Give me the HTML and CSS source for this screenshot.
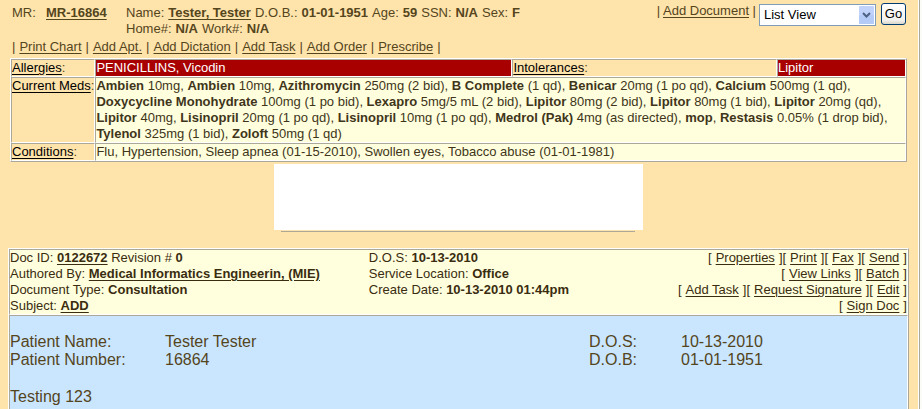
FILE: index.html
```html
<!DOCTYPE html>
<html lang="en">
<head>
<meta charset="utf-8">
<title>Patient Chart</title>
<link rel="stylesheet" href="styles.css">
</head>
<body>
<main class="page">
  <header class="top">
    <div class="patient">
      <span class="mr-label">MR:</span>
      <a class="mr-number" href="#">MR-16864</a>
      <div class="identity">
        <div class="fields"><span>Name:</span><a href="#"><b>Tester, Tester</b></a><span>D.O.B.:</span><b>01-01-1951</b><span>Age:</span><b>59</b><span>SSN:</span><b>N/A</b><span>Sex:</span><b>F</b></div>
        <div class="fields"><span>Home#:</span><b>N/A</b><span>Work#:</span><b>N/A</b></div>
      </div>
    </div>
    <form class="view-form">
      <span class="add-doc">| <a href="#">Add Document</a> |</span>
      <span class="select-wrap">
        <select aria-label="View"><option>List View</option></select>
        <svg class="arrow" viewBox="0 0 15 18" aria-hidden="true"><rect width="15" height="18" rx="1" fill="#c1d3fb"/><rect y="9" width="15" height="9" rx="1" fill="#b5cbf7"/><path d="M4 7l3.500 3.500L11 7" fill="none" stroke="#4d6185" stroke-width="2"/></svg>
      </span>
      <button type="button">Go</button>
    </form>
  </header>
  <nav class="actions"><span>|</span><a href="#">Print Chart</a><span>|</span><a href="#">Add Apt.</a><span>|</span><a href="#">Add Dictation</a><span>|</span><a href="#">Add Task</a><span>|</span><a href="#">Add Order</a><span>|</span><a href="#">Prescribe</a><span>|</span></nav>
  <table class="summary">
    <colgroup><col class="c1"><col class="c2"><col class="c3"><col class="c4"></colgroup>
    <tr>
      <th><a href="#">Allergies</a>:</th>
      <td class="alert">PENICILLINS, Vicodin</td>
      <th><a href="#">Intolerances</a>:</th>
      <td class="alert">Lipitor</td>
    </tr>
    <tr>
      <th><a href="#">Current Meds</a>:</th>
      <td colspan="3"><b>Ambien</b> 10mg, <b>Ambien</b> 10mg, <b>Azithromycin</b> 250mg (2 bid), <b>B Complete</b> (1 qd), <b>Benicar</b> 20mg (1 po qd), <b>Calcium</b> 500mg (1 qd), <b>Doxycycline Monohydrate</b> 100mg (1 po bid), <b>Lexapro</b> 5mg/5 mL (2 bid), <b>Lipitor</b> 80mg (2 bid), <b>Lipitor</b> 80mg (1 bid), <b>Lipitor</b> 20mg (qd), <b>Lipitor</b> 40mg, <b>Lisinopril</b> 20mg (1 po qd), <b>Lisinopril</b> 10mg (1 po qd), <b>Medrol (Pak)</b> 4mg (as directed), <b>mop</b>, <b>Restasis</b> 0.05% (1 drop bid), <b>Tylenol</b> 325mg (1 bid), <b>Zoloft</b> 50mg (1 qd)</td>
    </tr>
    <tr>
      <th><a href="#">Conditions</a>:</th>
      <td colspan="3">Flu, Hypertension, Sleep apnea (01-15-2010), Swollen eyes, Tobacco abuse (01-01-1981)</td>
    </tr>
  </table>
  <div class="notice"><div class="panel"></div><div class="rule"></div></div>
  <article class="document">
    <header class="doc-head">
      <div>
        <div>Doc ID: <a href="#"><b>0122672</b></a> Revision # <b>0</b></div>
        <div>Authored By: <a href="#"><b>Medical Informatics Engineerin, (MIE)</b></a></div>
        <div>Document Type: <b>Consultation</b></div>
        <div>Subject: <a href="#"><b>ADD</b></a></div>
      </div>
      <div>
        <div>D.O.S: <b>10-13-2010</b></div>
        <div>Service Location: <b>Office</b></div>
        <div>Create Date: <b>10-13-2010 01:44pm</b></div>
      </div>
      <div class="doc-links">
        <div><span>[</span><a href="#">Properties</a><span>][</span><a href="#">Print</a><span>][</span><a href="#">Fax</a><span>][</span><a href="#">Send</a><span>]</span></div>
        <div><span>[</span><a href="#">View Links</a><span>][</span><a href="#">Batch</a><span>]</span></div>
        <div><span>[</span><a href="#">Add Task</a><span>][</span><a href="#">Request Signature</a><span>][</span><a href="#">Edit</a><span>]</span></div>
        <div><span>[</span><a href="#">Sign Doc</a><span>]</span></div>
      </div>
    </header>
    <section class="doc-body">
      <div class="facts">
        <span>Patient Name:</span><span>Tester Tester</span><span>D.O.S:</span><span>10-13-2010</span>
        <span>Patient Number:</span><span>16864</span><span>D.O.B:</span><span>01-01-1951</span>
      </div>
      <p>Testing 123</p>
    </section>
  </article>
</main>
<aside class="edge"></aside>
</body>
</html>
```
FILE: styles.css
```css
* { box-sizing: border-box; }
body {
  margin: 0;
  min-height: 100vh;
  display: flex;
  background: #fee3ab;
  color: #54451c;
  font: 13px/16px "Liberation Sans", Arial, sans-serif;
}
a { color: inherit; text-underline-offset: 2px; }
.page { flex: 1; display: flex; flex-direction: column; padding: 3px 9px 0 8px; }
.edge { width: 4px; background: #fbfbf8; border-left: 1px solid #fff; box-shadow: inset 1px 0 #aca899; }

.top { display: flex; justify-content: space-between; padding: 0 3px 0 4px; }
.patient { display: flex; padding-top: 2px; }
.mr-label { width: 34px; }
.mr-number { width: 80px; font-weight: bold; }
.fields { display: flex; gap: 4px; }
.view-form { display: flex; align-items: flex-start; }
.add-doc { margin-right: 3px; }
.select-wrap { position: relative; margin: 1px 5px 0 0; }
select {
  display: block;
  appearance: none;
  width: 117px;
  height: 22px;
  padding: 0 20px 0 4px;
  border: 1px solid #7f9db9;
  border-radius: 0;
  background: #fff;
  color: #000;
  font: 13px/20px "Liberation Sans", Arial, sans-serif;
}
.arrow { position: absolute; top: 2px; right: 2px; width: 15px; height: 18px; pointer-events: none; }
button {
  width: 25px;
  height: 22px;
  padding: 0;
  border: 1px solid #003c74;
  border-radius: 3px;
  background: linear-gradient(#fff, #f3f2ed 80%, #d9d5c9);
  color: #000;
  font: 13px/20px "Liberation Sans", Arial, sans-serif;
}

.actions { display: flex; gap: 4px; padding: 2px 4px 0; margin-bottom: 3px; }

.summary {
  align-self: stretch;
  margin: 0 2px;
  table-layout: fixed;
  border-collapse: separate;
  border-spacing: 0;
  border: 1px solid;
  border-color: #fff #aca899 #aca899 #fff;
}
.c1 { width: 84px; }
.c2 { width: 417px; }
.c4 { width: 129px; }
.summary th, .summary td {
  padding: 0;
  border: 1px solid;
  border-color: #aca899 #fff #fff #aca899;
  text-align: left;
  vertical-align: top;
  font-weight: normal;
}
.summary th { white-space: nowrap; }
.summary td { background: #ffffdd; color: #40351a; }
.summary th a { color: #000; }
.summary .alert { background: #a80000; color: #fff; }

.notice { align-self: center; width: 369px; margin-top: 2px; }
.panel { height: 66px; background: #fff; }
.rule { height: 2px; margin: 0 8px 0 7px; border-bottom: 1px solid #aca899; }

.document {
  flex: 1;
  display: flex;
  flex-direction: column;
  margin-top: 16px;
  border: 1px solid;
  border-color: #fff #aca899 #aca899 #fff;
  border-bottom: 0;
}
.doc-head, .doc-body { border: 1px solid; border-color: #aca899 #fff #fff #aca899; }
.doc-head {
  display: grid;
  grid-template-columns: 40% 30% 30%;
  background: #ffffdd;
  color: #3a2c10;
}
.doc-links > div { display: flex; justify-content: flex-end; gap: 4px; }
.doc-body {
  flex: 1;
  padding-top: 17px;
  border-bottom: 0;
  background: #cae6ff;
  font-size: 16px;
  line-height: 18px;
}
.facts { display: grid; grid-template-columns: 155px 424px 92px 1fr; }
.doc-body p { margin: 19px 0 0; }
```
